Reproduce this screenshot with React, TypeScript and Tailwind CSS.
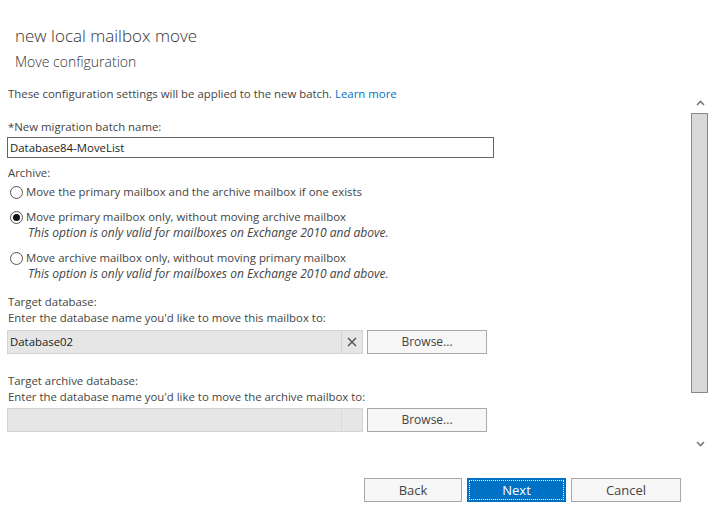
// Exchange admin center wizard page: "new local mailbox move" / Move configuration step.

import { useState } from 'react';

const FONT = "font-['Segoe_UI','Open_Sans',sans-serif]";

function Radio({ checked }: { checked?: boolean }) {
  return (
    <span className="mr-[3px] flex h-[13px] w-[13px] shrink-0 items-center justify-center rounded-full border border-[#555] bg-white">
      {checked && <span className="h-[7px] w-[7px] rounded-full bg-[#111]" />}
    </span>
  );
}

function Option({ label, note, checked }: { label: string; note?: string; checked?: boolean }) {
  return (
    <div className="pl-[2px]">
      <div className="flex h-[16px] items-center">
        <Radio checked={checked} />
        <span>{label}</span>
      </div>
      {note && <div className="h-[16px] pl-[18px] text-[12px] italic leading-[16px] text-[#444]">{note}</div>}
    </div>
  );
}

function GrayButton({ children, className = '' }: { children: React.ReactNode; className?: string }) {
  return (
    <button
      type="button"
      className={`flex h-[24px] items-center justify-center border border-[#a3aaa9] bg-[#f7f7f7] text-[#444] ${className}`}
    >
      {children}
    </button>
  );
}

function Chevron({ down }: { down?: boolean }) {
  return (
    <svg width="9" height="6" viewBox="0 0 9 6" className="block">
      <path
        d={down ? 'M1 1 L4.5 4.5 L8 1' : 'M1 5 L4.5 1.5 L8 5'}
        fill="none"
        stroke="#7a7a7a"
        strokeWidth="1.6"
      />
    </svg>
  );
}

export default function App() {
  const [name, setName] = useState('Database84-MoveList');

  return (
    <div className={`h-[515px] w-[712px] overflow-hidden bg-white text-[11.4px] leading-[16px] text-[#444] ${FONT}`}>
      <div className="pl-[15px] pt-[24px]">
        <h1 className="h-[24px] text-[17px] font-light leading-[24px] text-[#333]">new local mailbox move</h1>
        <h2 className="mt-[4px] h-[20px] text-[14px] font-light leading-[20px] text-[#333]">Move configuration</h2>
      </div>

      <div className="mt-[9px] flex h-[375px]">
        <div className="w-[683px] pl-[8px]">
          <p className="mt-[5px] h-[16px]">
            These configuration settings will be applied to the new batch.{' '}
            <a href="#" className="text-[#0072c6]">Learn more</a>
          </p>

          <div className="mt-[17px] h-[16px]">*New migration batch name:</div>
          <input
            value={name}
            onChange={(e) => setName(e.target.value)}
            className="-ml-[1px] mt-[2px] block h-[21px] w-[487px] border border-[#666] bg-white px-[2px] text-[11.4px] text-[#222] outline-none"
          />

          <div className="mt-[7px] h-[16px]">Archive:</div>
          <div className="mt-[3px]">
            <Option label="Move the primary mailbox and the archive mailbox if one exists" />
          </div>
          <div className="mt-[9px]">
            <Option
              checked
              label="Move primary mailbox only, without moving archive mailbox"
              note="This option is only valid for mailboxes on Exchange 2010 and above."
            />
          </div>
          <div className="mt-[9px]">
            <Option
              label="Move archive mailbox only, without moving primary mailbox"
              note="This option is only valid for mailboxes on Exchange 2010 and above."
            />
          </div>

          <div className="mt-[12px] h-[16px]">Target database:</div>
          <div className="h-[16px]">Enter the database name you'd like to move this mailbox to:</div>
          <div className="-ml-[1px] mt-[4px] flex gap-[4px]">
            <div className="flex h-[24px] w-[356px] border border-[#d4d4d4] bg-[#e6e6e6]">
              <div className="flex flex-1 items-center px-[2px] text-[#222]">Database02</div>
              <div className="flex w-[21px] items-center justify-center border-l border-[#d4d4d4]">
                <svg width="10" height="10" viewBox="0 0 10 10">
                  <path d="M1 1 L9 9 M9 1 L1 9" stroke="#555" strokeWidth="1.5" />
                </svg>
              </div>
            </div>
            <GrayButton className="w-[120px] text-[12px]">Browse...</GrayButton>
          </div>

          <div className="mt-[19px] h-[16px]">Target archive database:</div>
          <div className="h-[16px]">Enter the database name you'd like to move the archive mailbox to:</div>
          <div className="-ml-[1px] mt-[3px] flex gap-[4px]">
            <div className="flex h-[24px] w-[356px] border border-[#d4d4d4] bg-[#e6e6e6]">
              <div className="flex-1" />
              <div className="w-[21px] border-l border-[#dadada]" />
            </div>
            <GrayButton className="w-[120px] text-[12px]">Browse...</GrayButton>
          </div>
        </div>

        <div className="ml-[8px] flex w-[17px] flex-col items-center">
          <div className="mt-[19px] flex h-[6px] items-center justify-center pl-[2px]">
            <Chevron />
          </div>
          <div className="mt-[7px] h-[280px] w-[17px] border border-[#888] bg-[#d9d9d9]" />
          <div className="mt-[48px] flex h-[6px] items-center justify-center pl-[2px]">
            <Chevron down />
          </div>
        </div>
      </div>

      <div className="mt-[22px] flex justify-end gap-[5px] pr-[31px]">
        <GrayButton className="w-[98px] text-[13px]">Back</GrayButton>
        <button
          type="button"
          className="flex h-[24px] w-[99px] items-center justify-center bg-[#0072c6] p-[2px] text-[13px] text-white"
        >
          <span className="flex h-full w-full items-center justify-center border border-dotted border-white">Next</span>
        </button>
        <GrayButton className="w-[110px] text-[13px]">Cancel</GrayButton>
      </div>
    </div>
  );
}
